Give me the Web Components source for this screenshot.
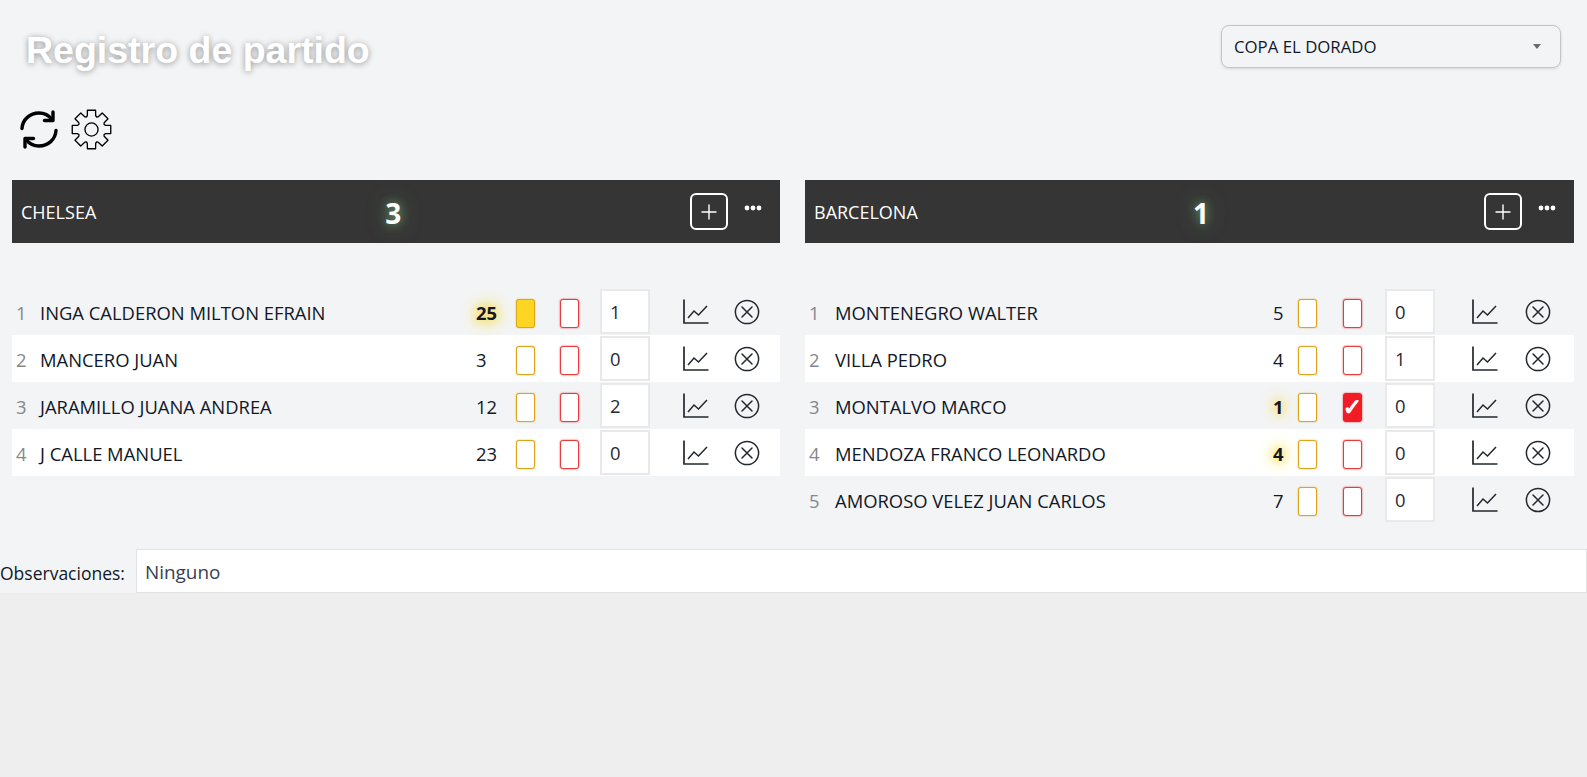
<!DOCTYPE html>
<html lang="es">
<head>
<meta charset="utf-8">
<title>Registro de partido</title>
<style>
  html, body { margin: 0; padding: 0; background: #eeeeee; }
  body { font-family: "Open Sans", "Noto Sans", sans-serif; color: #111827; }
</style>
</head>
<body>
<match-page>
  <match-topbar slot="top" title-text="Registro de partido" league="COPA EL DORADO"></match-topbar>
  <team-panel name="CHELSEA" score="3" cols="28px 436px 40px 44px 40px 83px 51px 1fr">
    <player-row idx="1" name="INGA CALDERON MILTON EFRAIN" dorsal="25" goals="1" scored yellow></player-row>
    <player-row idx="2" name="MANCERO JUAN" dorsal="3" goals="0"></player-row>
    <player-row idx="3" name="JARAMILLO JUANA ANDREA" dorsal="12" goals="2"></player-row>
    <player-row idx="4" name="J CALLE MANUEL" dorsal="23" goals="0"></player-row>
  </team-panel>
  <team-panel name="BARCELONA" score="1" cols="30px 438px 25px 45px 42px 87px 53px 1fr">
    <player-row idx="1" name="MONTENEGRO WALTER" dorsal="5" goals="0"></player-row>
    <player-row idx="2" name="VILLA PEDRO" dorsal="4" goals="1"></player-row>
    <player-row idx="3" name="MONTALVO MARCO" dorsal="1" goals="0" scored red></player-row>
    <player-row idx="4" name="MENDOZA FRANCO LEONARDO" dorsal="4" goals="0" scored></player-row>
    <player-row idx="5" name="AMOROSO VELEZ JUAN CARLOS" dorsal="7" goals="0"></player-row>
  </team-panel>
  <obs-field slot="bottom" label="Observaciones:" value="Ninguno"></obs-field>
</match-page>

<script>
// builds the outline of the 8 tooth gear, px coords around 20,20
function gearPath() {
  const pts = [];
  const at = (deg, r) => {
    const a = (deg - 90) * Math.PI / 180;
    return (20 + r * Math.cos(a)).toFixed(2) + ' ' + (20 + r * Math.sin(a)).toFixed(2);
  };
  for (let i = 0; i < 8; i++) {
    const c = i * 45;
    pts.push(at(c - 17, 14), at(c - 12, 19.2), at(c + 12, 19.2), at(c + 17, 14), at(c + 22.5, 13.2));
  }
  return 'M' + pts.join('L') + 'Z';
}

const ICONS = {
  sync: '<svg viewBox="0 0 40 40" width="40" height="41" fill="none" stroke="#000" stroke-width="3.4" stroke-linecap="round" stroke-linejoin="round"><path d="M3 19C3.500 10 11 3.500 20 3.500c5.500 0 10 2.500 13 6.500"/><path d="M34 2.500V11h-8.500"/><path d="M37 21c-.5 9-8 15.500-17 15.500-5.500 0-10-2.500-13-6.500"/><path d="M6 37.500V29h8.500"/></svg>',
  gear: '<svg viewBox="0 0 40 40" width="41" height="41" fill="none" stroke="#000" stroke-width="1.300" stroke-linejoin="round"><circle cx="20" cy="20" r="6.400"/><path d="' + gearPath() + '"/></svg>',
  plus: '<svg viewBox="0 0 16 16" width="16" height="16" fill="none" stroke="#fff" stroke-width="1.400" stroke-linecap="round"><path d="M8 1v14M1 8h14"/></svg>',
  dots: '<svg viewBox="0 0 18 6" width="18" height="6" fill="#fff"><circle cx="3" cy="3" r="2.400"/><circle cx="9" cy="3" r="2.400"/><circle cx="15" cy="3" r="2.400"/></svg>',
  chart: '<svg viewBox="0 0 26 25" width="26" height="25" fill="none" stroke="#23272e"><path d="M1 .5V24h24.500" stroke-width="1.700"/><path d="M5 19l6-7 4.500 4L24 7" stroke-width="1.500"/></svg>',
  cross: '<svg viewBox="0 0 26 26" width="26" height="26" fill="none" stroke="#23272e" stroke-width="1.500"><circle cx="13" cy="13" r="11.600"/><path d="M8 8l10 10M18 8L8 18" stroke-linecap="round"/></svg>'
};

class MatchPage extends HTMLElement {
  constructor() {
    super();
    this.attachShadow({ mode: 'open' });
    this.shadowRoot.innerHTML = `
      <style>
        :host { display: block; background: #f3f4f6; height: 593px; box-sizing: border-box; }
        .teams {
          display: grid;
          grid-template-columns: 768px 769px;
          column-gap: 25px;
          padding-left: 12px;
          height: 369px;
        }
      </style>
      <slot name="top"></slot>
      <div class="teams"><slot></slot></div>
      <slot name="bottom"></slot>
    `;
  }
}

class MatchTopbar extends HTMLElement {
  constructor() {
    super();
    this.attachShadow({ mode: 'open' });
    this.shadowRoot.innerHTML = `
      <style>
        :host { display: block; height: 180px; box-sizing: border-box; }
        .head { display: flex; justify-content: space-between; align-items: flex-start; height: 107px; }
        h1 {
          margin: 28px 0 0 26px;
          font: bold 37.5px/44px "Liberation Sans", Arial, sans-serif;
          color: #fff;
          text-shadow: 0 1px 6px rgba(0,0,0,.4);
        }
        .league {
          display: flex;
          align-items: center;
          justify-content: space-between;
          box-sizing: border-box;
          width: 340px;
          height: 43px;
          margin: 25px 26px 0 0;
          padding: 0 19px 0 12px;
          border: 1px solid #c4c4c8;
          border-radius: 8px;
          box-shadow: 0 1px 3px rgba(0,0,0,.12);
          font-size: 16.8px;
        }
        .caret { width: 0; height: 0; border: 4px solid transparent; border-top: 5px solid #6b6b6b; border-bottom: 0; }
        .tools { display: flex; align-items: center; gap: 12px; padding-left: 19px; height: 44px; }
        .tools span { display: flex; }
      </style>
      <div class="head">
        <h1></h1>
        <div class="league"><span class="txt"></span><i class="caret"></i></div>
      </div>
      <div class="tools"><span>${ICONS.sync}</span><span>${ICONS.gear}</span></div>
    `;
  }
  connectedCallback() {
    this.shadowRoot.querySelector('h1').textContent = this.getAttribute('title-text');
    this.shadowRoot.querySelector('.txt').textContent = this.getAttribute('league');
  }
}

class TeamPanel extends HTMLElement {
  constructor() {
    super();
    this.attachShadow({ mode: 'open' });
    this.shadowRoot.innerHTML = `
      <style>
        :host { display: block; }
        .bar {
          display: flex;
          align-items: center;
          justify-content: space-between;
          height: 63px;
          padding: 0 18px 0 9px;
          background: #353535;
          color: #fff;
          font-size: 18px;
        }
        .score {
          font-size: 28px;
          font-weight: 700;
          line-height: 1;
          padding-top: 2px;
          text-shadow: 0 0 10px rgba(140,220,140,.55), 0 0 20px rgba(140,220,140,.5);
        }
        .actions { display: flex; align-items: center; gap: 16px; }
        .add {
          display: flex;
          align-items: center;
          justify-content: center;
          box-sizing: border-box;
          width: 38px;
          height: 37px;
          border: 2px solid #fff;
          border-radius: 6px;
        }
        .more { display: flex; margin-top: -8px; }
        .rows { padding-top: 45px; }
      </style>
      <div class="bar">
        <span class="name"></span>
        <span class="score"></span>
        <div class="actions">
          <span class="add">${ICONS.plus}</span>
          <span class="more">${ICONS.dots}</span>
        </div>
      </div>
      <div class="rows"><slot></slot></div>
    `;
  }
  connectedCallback() {
    this.shadowRoot.querySelector('.name').textContent = this.getAttribute('name');
    this.shadowRoot.querySelector('.score').textContent = this.getAttribute('score');
    this.style.setProperty('--row-cols', this.getAttribute('cols'));
  }
}

class PlayerRow extends HTMLElement {
  constructor() {
    super();
    this.attachShadow({ mode: 'open' });
    this.shadowRoot.innerHTML = `
      <style>
        :host { display: block; height: 47px; }
        :host(:nth-child(even)) { background: #fff; }
        .row {
          display: grid;
          grid-template-columns: var(--row-cols);
          align-items: center;
          height: 100%;
          font-size: 18.4px;
        }
        .idx, .name, .dorsal { padding-top: 2px; }
        .idx { padding-left: 4px; color: #85888c; }
        .dorsal { white-space: nowrap; }
        :host([scored]) .dorsal {
          font-weight: 700;
          text-shadow: 0 0 8px #ffdc3c, 0 0 14px #ffdc3c, 0 0 20px #ffdc3c;
        }
        .card {
          box-sizing: border-box;
          width: 19px;
          height: 29px;
          margin-top: 4px;
          background: #fff;
          border-radius: 3px;
        }
        .card.y { border: 1px solid #dfa41c; box-shadow: 0 0 1.5px #dfa41c; }
        .card.r {
          border: 1px solid #e63b3b;
          box-shadow: 0 0 2px #e63b3b;
          display: flex; align-items: center; justify-content: center;
          color: #fff; font: 700 23px/1 "DejaVu Sans", sans-serif;
          -webkit-text-stroke: 1px #fff;
        }
        :host([yellow]) .card.y { background: #ffd524; border-color: #d9a81c; }
        :host([red]) .card.r { background: #f11c26; border-color: #f11c26; }
        .goals {
          box-sizing: border-box;
          width: 50px;
          height: 45px;
          padding-left: 8px;
          line-height: 42px;
          background: #fff;
          border: 2px solid #e9e9e9;
          color: #1f2937;
        }
        .ico { display: flex; }
      </style>
      <div class="row">
        <span class="idx"></span>
        <span class="name"></span>
        <span class="dorsal"></span>
        <span class="card y"></span>
        <span class="card r"></span>
        <span class="goals"></span>
        <span class="ico">${ICONS.chart}</span>
        <span class="ico">${ICONS.cross}</span>
      </div>
    `;
  }
  connectedCallback() {
    const root = this.shadowRoot;
    for (const key of ['idx', 'name', 'dorsal', 'goals']) {
      root.querySelector('.' + key).textContent = this.getAttribute(key);
    }
    if (this.hasAttribute('red')) root.querySelector('.card.r').textContent = '✓';
  }
}

class ObsField extends HTMLElement {
  constructor() {
    super();
    this.attachShadow({ mode: 'open' });
    this.shadowRoot.innerHTML = `
      <style>
        :host { display: flex; align-items: center; height: 44px; font-size: 17.5px; }
        .label { width: 136px; white-space: nowrap; padding-top: 3px; }
        .value {
          flex: 1;
          box-sizing: border-box;
          height: 44px;
          line-height: 45px;
          padding-left: 8px;
          background: #fff;
          border: 1px solid #e2e2e2;
          font-size: 18.9px;
          color: #374151;
        }
      </style>
      <span class="label"></span>
      <span class="value"></span>
    `;
  }
  connectedCallback() {
    this.shadowRoot.querySelector('.label').textContent = this.getAttribute('label');
    this.shadowRoot.querySelector('.value').textContent = this.getAttribute('value');
  }
}

customElements.define('match-page', MatchPage);
customElements.define('match-topbar', MatchTopbar);
customElements.define('team-panel', TeamPanel);
customElements.define('player-row', PlayerRow);
customElements.define('obs-field', ObsField);
</script>
</body>
</html>
